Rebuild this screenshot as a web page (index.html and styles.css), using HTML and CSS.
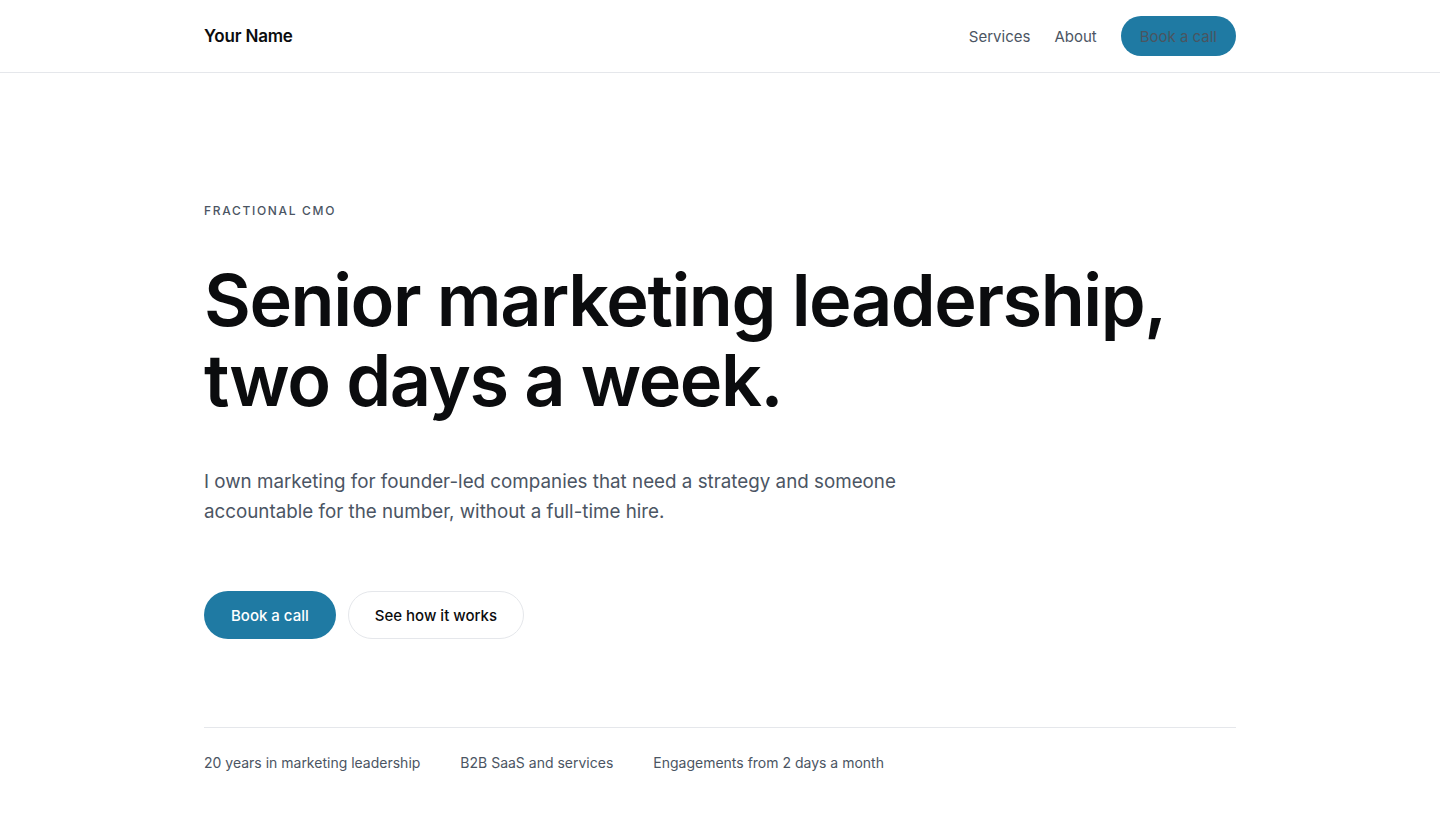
FILE: index.html
```html
<!DOCTYPE html>
<html lang="en">
<head>
    <meta charset="UTF-8">
    <meta name="viewport" content="width=device-width, initial-scale=1.0">
    <title>Your Name - Fractional CMO</title>
    <link rel="stylesheet" href="styles.css">
</head>
<body>
    <header class="site-header">
        <div class="container header-inner">
            <a href="#" class="brand">Your Name</a>
            <nav class="nav">
                <a href="#services" class="nav-link">Services</a>
                <a href="#about" class="nav-link">About</a>
                <a href="#book" class="btn btn-nav">Book a call</a>
            </nav>
        </div>
    </header>

    <main class="container hero">
        <p class="eyebrow">Fractional CMO</p>
        <h1 class="hero-title">Senior marketing leadership,<br>two days a week.</h1>
        <p class="hero-lead">I own marketing for founder-led companies that need a strategy and someone accountable for the number, without a full-time hire.</p>

        <div class="hero-actions">
            <a href="#book" class="btn btn-primary">Book a call</a>
            <a href="#how" class="btn btn-secondary">See how it works</a>
        </div>

        <ul class="facts">
            <li>20 years in marketing leadership</li>
            <li>B2B SaaS and services</li>
            <li>Engagements from 2 days a month</li>
        </ul>
    </main>
</body>
</html>
```

FILE: styles.css
```css
* {
    box-sizing: border-box;
}
body {
    margin: 0;
    font-family: Inter, "Noto Sans", sans-serif;
    background-color: #ffffff;
    color: #0b0c0e;
}
a {
    text-decoration: none;
    color: inherit;
}
.container {
    max-width: 1032px;
    margin: 0 auto;
}
.site-header {
    border-bottom: 1px solid #e5e7eb;
}
.header-inner {
    height: 72px;
    display: flex;
    align-items: center;
    justify-content: space-between;
}
.brand {
    font-size: 17px;
    font-weight: 600;
    letter-spacing: -0.01em;
    color: #0b0c0e;
}
.nav {
    display: flex;
    align-items: center;
    gap: 24px;
}
.nav-link {
    font-size: 15px;
    color: #4b5563;
}
.btn {
    display: inline-flex;
    align-items: center;
    justify-content: center;
    border-radius: 999px;
    font-size: 15px;
    font-weight: 500;
}
.btn-nav {
    height: 40px;
    padding: 0 19px;
    background-color: #1f7aa3;
    color: #4a5560;
    font-weight: 400;
}
.hero {
    padding-top: 130px;
}
.eyebrow {
    margin: 0 0 42px;
    font-size: 12px;
    font-weight: 500;
    letter-spacing: 0.14em;
    text-transform: uppercase;
    color: #4b5563;
}
.hero-title {
    margin: 0;
    font-size: 72px;
    line-height: 80px;
    font-weight: 600;
    letter-spacing: -0.02em;
    color: #0b0c0e;
}
.hero-lead {
    max-width: 720px;
    margin: 47px 0 0;
    font-size: 18.8px;
    line-height: 30px;
    color: #4b5563;
}
.hero-actions {
    display: flex;
    gap: 12px;
    margin-top: 64px;
}
.btn-primary {
    height: 48px;
    padding: 0 27px;
    background-color: #1f7aa3;
    color: #ffffff;
}
.btn-secondary {
    height: 48px;
    padding: 0 26px;
    background-color: #ffffff;
    border: 1px solid #e5e7eb;
    color: #0b0c0e;
}
.facts {
    display: flex;
    gap: 40px;
    list-style: none;
    margin: 88px 0 0;
    padding: 26px 0 0;
    border-top: 1px solid #e5e7eb;
    font-size: 14px;
    color: #4b5563;
}
```
